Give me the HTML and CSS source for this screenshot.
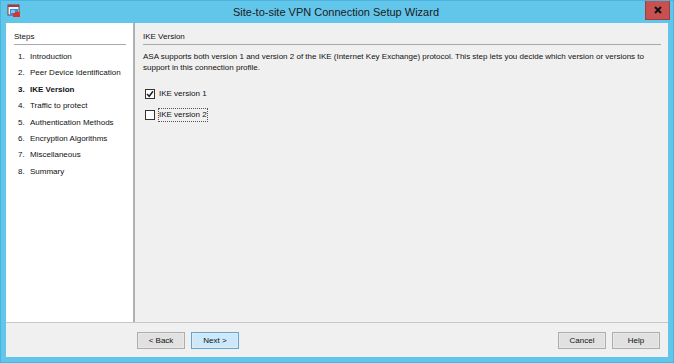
FILE: index.html
```html
<!DOCTYPE html>
<html>
<head>
<meta charset="utf-8">
<link rel="stylesheet" href="styles.css">
</head>
<body>
<div class="window">
  <div class="titlebar">
    <svg class="app-icon" width="14" height="14" viewBox="0 0 14 14">
      <rect x="1" y="1" width="11" height="10" fill="#f4f4f4" stroke="#7a3b3b" stroke-width="1"/>
      <rect x="1" y="1" width="11" height="2" fill="#a23a4a"/>
      <rect x="3" y="5" width="8" height="6" fill="#2e8fd8"/>
      <rect x="6" y="8" width="7" height="5" fill="#d8332f"/>
      <rect x="4" y="6" width="4" height="3" fill="#7cc6f0"/>
    </svg>
    <div class="title">Site-to-site VPN Connection Setup Wizard</div>
    <div class="close">
      <svg width="8" height="8" viewBox="0 0 8 8"><path d="M1 1L7 7M7 1L1 7" stroke="#111" stroke-width="2"/></svg>
    </div>
  </div>
  <div class="client">
    <div class="main">
      <div class="steps">
        <div class="heading">Steps</div>
        <ol class="step-list">
          <li><span class="num">1.</span>Introduction</li>
          <li><span class="num">2.</span>Peer Device Identification</li>
          <li class="current"><span class="num">3.</span>IKE Version</li>
          <li><span class="num">4.</span>Traffic to protect</li>
          <li><span class="num">5.</span>Authentication Methods</li>
          <li><span class="num">6.</span>Encryption Algorithms</li>
          <li><span class="num">7.</span>Miscellaneous</li>
          <li><span class="num">8.</span>Summary</li>
        </ol>
      </div>
      <div class="content">
        <div class="heading">IKE Version</div>
        <p class="desc">ASA supports both version 1 and version 2 of the IKE (Internet Key Exchange) protocol. This step lets you decide which version or versions to support in this connection profile.</p>
        <label class="check"><span class="box checked"><svg width="8" height="8" viewBox="0 0 8 8"><path d="M1 4L3.2 6.3L7 1.2" fill="none" stroke="#222" stroke-width="1.5"/></svg></span>IKE version 1</label>
        <label class="check"><span class="box"></span><span class="focus">IKE version 2</span></label>
      </div>
    </div>
    <div class="buttons">
      <div class="nav">
        <button class="btn">&lt; Back</button>
        <button class="btn primary">Next &gt;</button>
      </div>
      <div class="actions">
        <button class="btn">Cancel</button>
        <button class="btn">Help</button>
      </div>
    </div>
  </div>
</div>
</body>
</html>
```
FILE: styles.css
```css
html, body {
  margin: 0;
  padding: 0;
}
body {
  width: 674px;
  height: 363px;
  overflow: hidden;
  font-family: "Liberation Sans", Arial, sans-serif;
  font-size: 8px;
  color: #111;
}
.window {
  box-sizing: border-box;
  width: 674px;
  height: 363px;
  background: #62c5ea;
  border: 1px solid #4cb3de;
  display: flex;
  flex-direction: column;
  padding: 0 5px 5px 5px;
}
.titlebar {
  height: 22px;
  display: flex;
  align-items: center;
}
.app-icon {
  margin-left: 1px;
  margin-top: -2px;
}
.title {
  flex: 1;
  text-align: center;
  font-family: "Liberation Sans", Arial, sans-serif;
  font-size: 11px;
  color: #1b1b1b;
  margin-top: -1px;
  padding-left: 6px;
}
.close {
  width: 25px;
  height: 19px;
  background: #c75050;
  border: 1px solid #a33b3b;
  border-top: none;
  box-sizing: border-box;
  display: flex;
  align-items: center;
  justify-content: center;
  align-self: flex-start;
  margin-right: -2px;
}
.client {
  flex: 1;
  display: flex;
  flex-direction: column;
  background: #f0f0f0;
}
.main {
  height: 299px;
  display: flex;
  border-bottom: 1px solid #c8c8c8;
}
.steps {
  width: 129px;
  background: #fff;
  border-right: 2px solid #b0b0b0;
  padding: 9px 7px 0 8px;
  box-sizing: border-box;
  flex-shrink: 0;
}
.heading {
  padding-bottom: 2px;
  border-bottom: 1px solid #a8a8a8;
  line-height: 10px;
}
.step-list {
  list-style: none;
  margin: 4px 0 0 0;
  padding: 0 0 0 4px;
}
.step-list li {
  line-height: 16.4px;
  white-space: nowrap;
}
.step-list .num {
  display: inline-block;
  width: 12px;
}
.step-list .current {
  font-weight: bold;
}
.content {
  flex: 1;
  padding: 9px 7px 0 8px;
}
.desc {
  margin: 5.5px 0 15px 0;
  line-height: 11px;
}
.check {
  display: flex;
  align-items: center;
  margin: 0 0 9px 2px;
  line-height: 12px;
}
.box {
  width: 8px;
  height: 8px;
  border: 1px solid #333;
  background: #fff;
  margin-right: 4px;
  display: flex;
  align-items: center;
  justify-content: center;
}
.focus {
  outline: 1px dotted #555;
}
.buttons {
  flex: 1;
  display: flex;
  align-items: center;
  justify-content: space-between;
  padding: 0 8px 0 131px;
}
.nav, .actions {
  display: flex;
  gap: 6px;
}
.btn {
  width: 48px;
  height: 17px;
  padding: 0;
  font-family: inherit;
  font-size: 8px;
  color: #111;
  background: #e1e1e1;
  border: 1px solid #adadad;
  box-shadow: inset 0 0 0 1px #e8e8e8;
}
.btn.primary {
  background: #cce8fb;
  border-color: #5aa6dd;
}
```
